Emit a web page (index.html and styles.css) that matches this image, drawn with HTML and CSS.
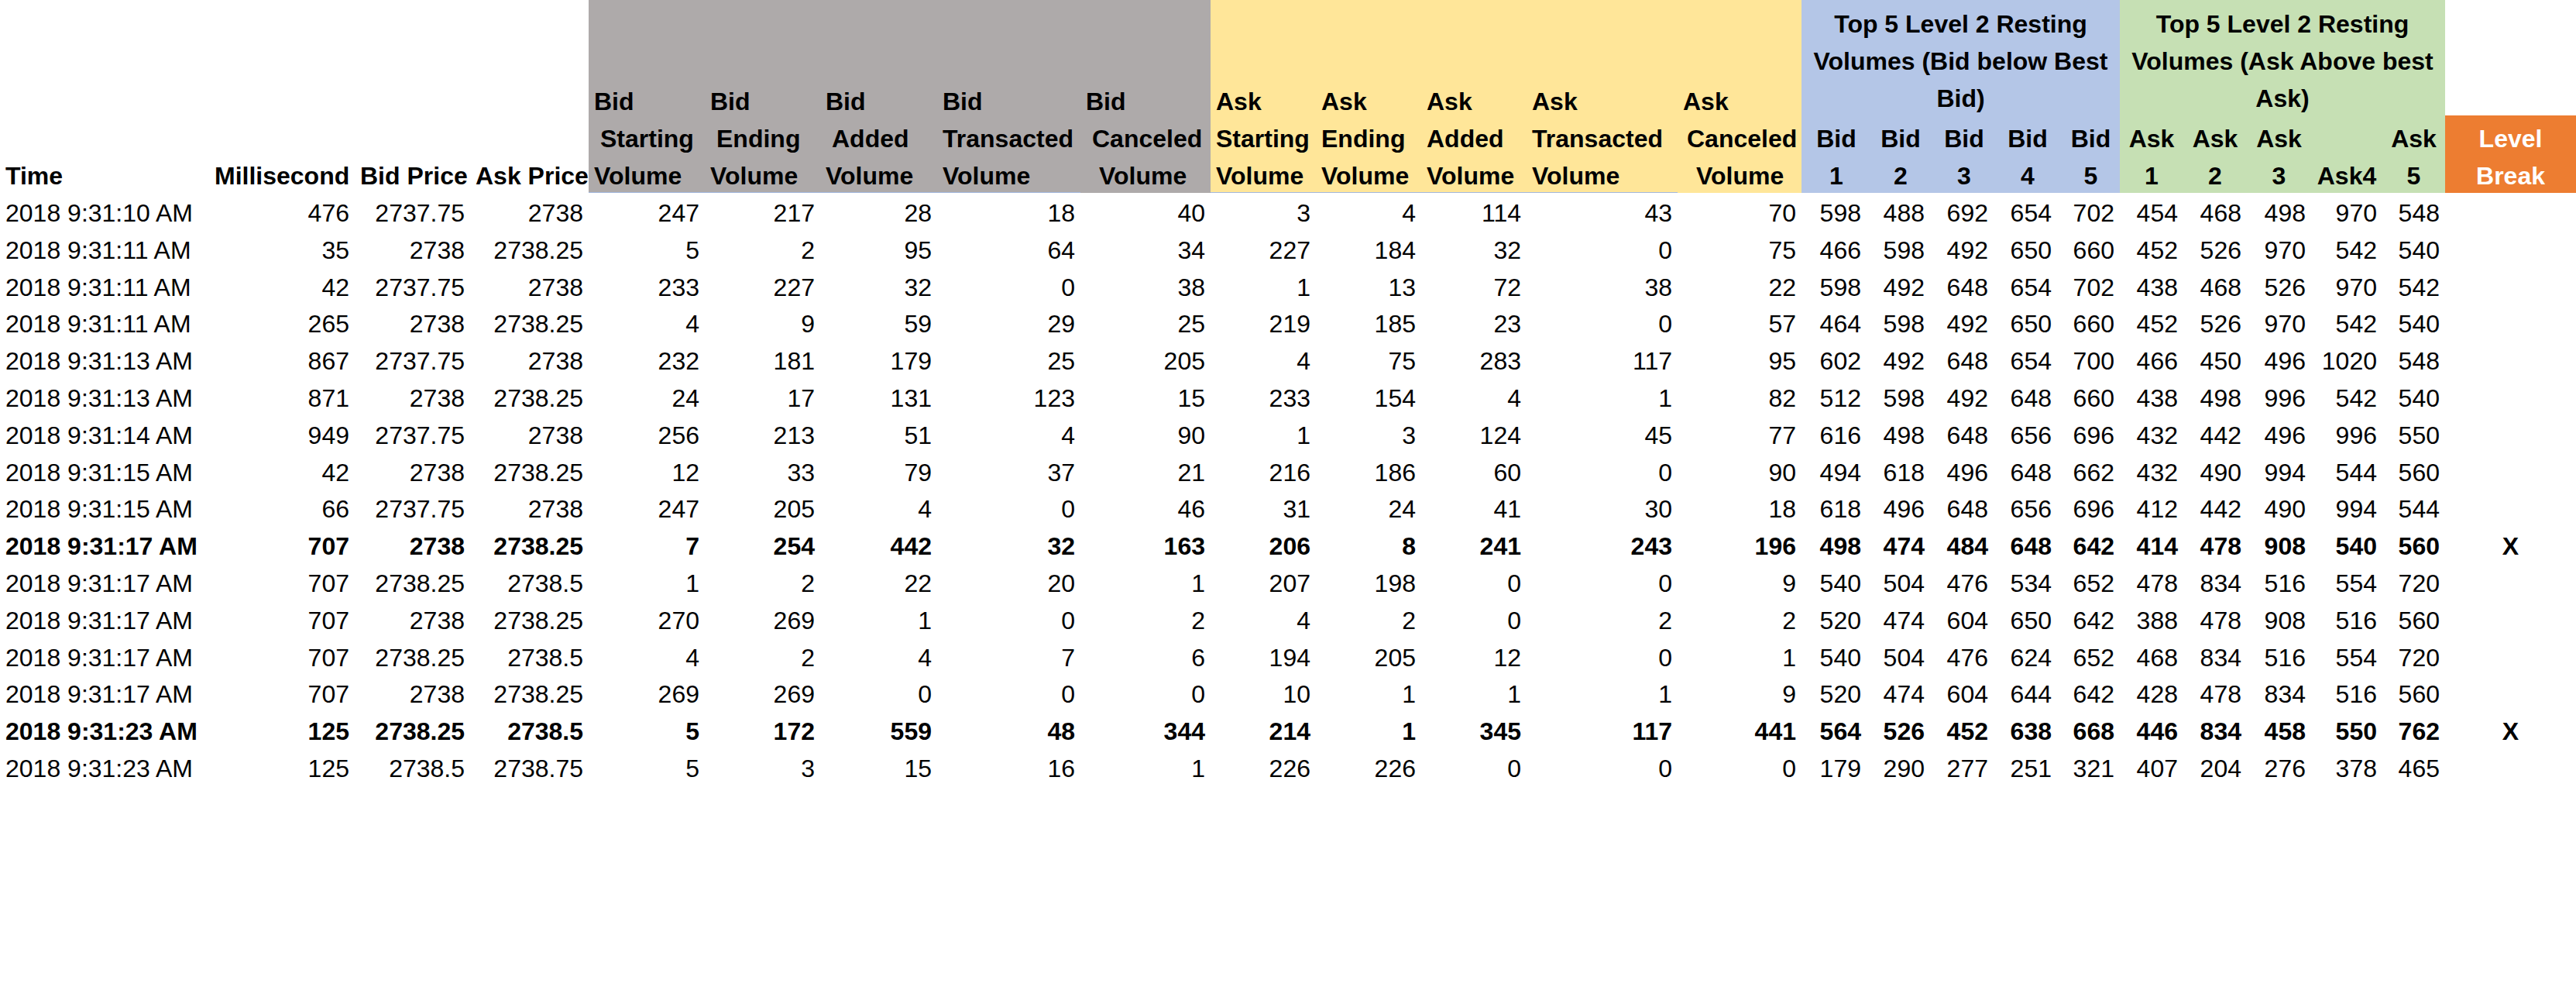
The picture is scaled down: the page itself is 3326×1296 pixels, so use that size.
FILE: index.html
```html
<!DOCTYPE html>
<html lang="en">
<head>
<meta charset="utf-8">
<title>Level 2 Order Book</title>
<link rel="stylesheet" href="styles.css">
</head>
<body>
<table class="sheet">
  <colgroup>
    <col style="width:270px"><col style="width:188px"><col style="width:149px"><col style="width:153px">
    <col style="width:150px"><col style="width:149px"><col style="width:151px"><col style="width:185px"><col style="width:168px">
    <col style="width:136px"><col style="width:136px"><col style="width:136px"><col style="width:195px"><col style="width:160px">
    <col style="width:84px"><col style="width:82px"><col style="width:82px"><col style="width:82px"><col style="width:81px">
    <col style="width:82px"><col style="width:82px"><col style="width:83px"><col style="width:92px"><col style="width:81px">
    <col style="width:169px">
  </colgroup>
  <thead>
    <tr class="h1">
      <th rowspan="2" class="left"><span class="ln">Time</span></th>
      <th rowspan="2" class="right"><span class="ln">Millisecond</span></th>
      <th rowspan="2" class="right"><span class="ln">Bid Price</span></th>
      <th rowspan="2" class="right"><span class="ln">Ask Price</span></th>
      <th rowspan="2" class="left gray line"><span class="ln top">Bid</span><span class="ln in1">Starting</span><span class="ln">Volume</span></th>
      <th rowspan="2" class="left gray line"><span class="ln top">Bid</span><span class="ln in1">Ending</span><span class="ln">Volume</span></th>
      <th rowspan="2" class="left gray line"><span class="ln top">Bid</span><span class="ln in1">Added</span><span class="ln">Volume</span></th>
      <th rowspan="2" class="left gray line"><span class="ln top">Bid</span><span class="ln">Transacted</span><span class="ln">Volume</span></th>
      <th rowspan="2" class="left gray"><span class="ln top">Bid</span><span class="ln in1">Canceled</span><span class="ln in2">Volume</span></th>
      <th rowspan="2" class="left yellow line"><span class="ln top">Ask</span><span class="ln">Starting</span><span class="ln">Volume</span></th>
      <th rowspan="2" class="left yellow line"><span class="ln top">Ask</span><span class="ln">Ending</span><span class="ln">Volume</span></th>
      <th rowspan="2" class="left yellow line"><span class="ln top">Ask</span><span class="ln">Added</span><span class="ln">Volume</span></th>
      <th rowspan="2" class="left yellow line"><span class="ln top">Ask</span><span class="ln">Transacted</span><span class="ln">Volume</span></th>
      <th rowspan="2" class="left yellow"><span class="ln top">Ask</span><span class="ln in3">Canceled</span><span class="ln in2">Volume</span></th>
      <th colspan="5" class="center blue"><span class="ln">Top 5 Level 2 Resting</span><span class="ln">Volumes (Bid below Best</span><span class="ln">Bid)</span></th>
      <th colspan="5" class="center green"><span class="ln">Top 5 Level 2 Resting</span><span class="ln">Volumes (Ask Above best</span><span class="ln">Ask)</span></th>
      <th></th>
    </tr>
    <tr class="h2">
      <th class="center blue shift"><span class="ln">Bid</span><span class="ln">1</span></th>
      <th class="center blue shift"><span class="ln">Bid</span><span class="ln">2</span></th>
      <th class="center blue shift"><span class="ln">Bid</span><span class="ln">3</span></th>
      <th class="center blue shift"><span class="ln">Bid</span><span class="ln">4</span></th>
      <th class="center blue shift"><span class="ln">Bid</span><span class="ln">5</span></th>
      <th class="center green"><span class="ln">Ask</span><span class="ln">1</span></th>
      <th class="center green"><span class="ln">Ask</span><span class="ln">2</span></th>
      <th class="center green"><span class="ln">Ask</span><span class="ln">3</span></th>
      <th class="center green"><span class="ln">Ask4</span></th>
      <th class="center green"><span class="ln">Ask</span><span class="ln">5</span></th>
      <th class="center orange"><span class="ln">Level</span><span class="ln">Break</span></th>
    </tr>
  </thead>
  <tbody>
    <tr><td>2018 9:31:10 AM</td><td>476</td><td>2737.75</td><td>2738</td><td>247</td><td>217</td><td>28</td><td>18</td><td>40</td><td>3</td><td>4</td><td>114</td><td>43</td><td>70</td><td>598</td><td>488</td><td>692</td><td>654</td><td>702</td><td>454</td><td>468</td><td>498</td><td>970</td><td>548</td><td></td></tr>
    <tr><td>2018 9:31:11 AM</td><td>35</td><td>2738</td><td>2738.25</td><td>5</td><td>2</td><td>95</td><td>64</td><td>34</td><td>227</td><td>184</td><td>32</td><td>0</td><td>75</td><td>466</td><td>598</td><td>492</td><td>650</td><td>660</td><td>452</td><td>526</td><td>970</td><td>542</td><td>540</td><td></td></tr>
    <tr><td>2018 9:31:11 AM</td><td>42</td><td>2737.75</td><td>2738</td><td>233</td><td>227</td><td>32</td><td>0</td><td>38</td><td>1</td><td>13</td><td>72</td><td>38</td><td>22</td><td>598</td><td>492</td><td>648</td><td>654</td><td>702</td><td>438</td><td>468</td><td>526</td><td>970</td><td>542</td><td></td></tr>
    <tr><td>2018 9:31:11 AM</td><td>265</td><td>2738</td><td>2738.25</td><td>4</td><td>9</td><td>59</td><td>29</td><td>25</td><td>219</td><td>185</td><td>23</td><td>0</td><td>57</td><td>464</td><td>598</td><td>492</td><td>650</td><td>660</td><td>452</td><td>526</td><td>970</td><td>542</td><td>540</td><td></td></tr>
    <tr><td>2018 9:31:13 AM</td><td>867</td><td>2737.75</td><td>2738</td><td>232</td><td>181</td><td>179</td><td>25</td><td>205</td><td>4</td><td>75</td><td>283</td><td>117</td><td>95</td><td>602</td><td>492</td><td>648</td><td>654</td><td>700</td><td>466</td><td>450</td><td>496</td><td>1020</td><td>548</td><td></td></tr>
    <tr><td>2018 9:31:13 AM</td><td>871</td><td>2738</td><td>2738.25</td><td>24</td><td>17</td><td>131</td><td>123</td><td>15</td><td>233</td><td>154</td><td>4</td><td>1</td><td>82</td><td>512</td><td>598</td><td>492</td><td>648</td><td>660</td><td>438</td><td>498</td><td>996</td><td>542</td><td>540</td><td></td></tr>
    <tr><td>2018 9:31:14 AM</td><td>949</td><td>2737.75</td><td>2738</td><td>256</td><td>213</td><td>51</td><td>4</td><td>90</td><td>1</td><td>3</td><td>124</td><td>45</td><td>77</td><td>616</td><td>498</td><td>648</td><td>656</td><td>696</td><td>432</td><td>442</td><td>496</td><td>996</td><td>550</td><td></td></tr>
    <tr><td>2018 9:31:15 AM</td><td>42</td><td>2738</td><td>2738.25</td><td>12</td><td>33</td><td>79</td><td>37</td><td>21</td><td>216</td><td>186</td><td>60</td><td>0</td><td>90</td><td>494</td><td>618</td><td>496</td><td>648</td><td>662</td><td>432</td><td>490</td><td>994</td><td>544</td><td>560</td><td></td></tr>
    <tr><td>2018 9:31:15 AM</td><td>66</td><td>2737.75</td><td>2738</td><td>247</td><td>205</td><td>4</td><td>0</td><td>46</td><td>31</td><td>24</td><td>41</td><td>30</td><td>18</td><td>618</td><td>496</td><td>648</td><td>656</td><td>696</td><td>412</td><td>442</td><td>490</td><td>994</td><td>544</td><td></td></tr>
    <tr class="bold"><td>2018 9:31:17 AM</td><td>707</td><td>2738</td><td>2738.25</td><td>7</td><td>254</td><td>442</td><td>32</td><td>163</td><td>206</td><td>8</td><td>241</td><td>243</td><td>196</td><td>498</td><td>474</td><td>484</td><td>648</td><td>642</td><td>414</td><td>478</td><td>908</td><td>540</td><td>560</td><td>X</td></tr>
    <tr><td>2018 9:31:17 AM</td><td>707</td><td>2738.25</td><td>2738.5</td><td>1</td><td>2</td><td>22</td><td>20</td><td>1</td><td>207</td><td>198</td><td>0</td><td>0</td><td>9</td><td>540</td><td>504</td><td>476</td><td>534</td><td>652</td><td>478</td><td>834</td><td>516</td><td>554</td><td>720</td><td></td></tr>
    <tr><td>2018 9:31:17 AM</td><td>707</td><td>2738</td><td>2738.25</td><td>270</td><td>269</td><td>1</td><td>0</td><td>2</td><td>4</td><td>2</td><td>0</td><td>2</td><td>2</td><td>520</td><td>474</td><td>604</td><td>650</td><td>642</td><td>388</td><td>478</td><td>908</td><td>516</td><td>560</td><td></td></tr>
    <tr><td>2018 9:31:17 AM</td><td>707</td><td>2738.25</td><td>2738.5</td><td>4</td><td>2</td><td>4</td><td>7</td><td>6</td><td>194</td><td>205</td><td>12</td><td>0</td><td>1</td><td>540</td><td>504</td><td>476</td><td>624</td><td>652</td><td>468</td><td>834</td><td>516</td><td>554</td><td>720</td><td></td></tr>
    <tr><td>2018 9:31:17 AM</td><td>707</td><td>2738</td><td>2738.25</td><td>269</td><td>269</td><td>0</td><td>0</td><td>0</td><td>10</td><td>1</td><td>1</td><td>1</td><td>9</td><td>520</td><td>474</td><td>604</td><td>644</td><td>642</td><td>428</td><td>478</td><td>834</td><td>516</td><td>560</td><td></td></tr>
    <tr class="bold"><td>2018 9:31:23 AM</td><td>125</td><td>2738.25</td><td>2738.5</td><td>5</td><td>172</td><td>559</td><td>48</td><td>344</td><td>214</td><td>1</td><td>345</td><td>117</td><td>441</td><td>564</td><td>526</td><td>452</td><td>638</td><td>668</td><td>446</td><td>834</td><td>458</td><td>550</td><td>762</td><td>X</td></tr>
    <tr><td>2018 9:31:23 AM</td><td>125</td><td>2738.5</td><td>2738.75</td><td>5</td><td>3</td><td>15</td><td>16</td><td>1</td><td>226</td><td>226</td><td>0</td><td>0</td><td>0</td><td>179</td><td>290</td><td>277</td><td>251</td><td>321</td><td>407</td><td>204</td><td>276</td><td>378</td><td>465</td><td></td></tr>
  </tbody>
</table>
</body>
</html>
```

FILE: styles.css
```css
html, body {
  margin: 0;
  padding: 0;
  background: #ffffff;
  overflow: hidden;
}

.sheet {
  table-layout: fixed;
  width: 3326px;
  border-collapse: separate;
  border-spacing: 0;
  font-family: "Liberation Sans", Arial, sans-serif;
  font-size: 32px;
  color: #000000;
}

.sheet th {
  padding: 0 7px;
  vertical-align: bottom;
  font-weight: bold;
  white-space: nowrap;
  overflow: hidden;
}

.sheet .h1 th {
  height: 149px;
}

.sheet .h2 th {
  height: 100px;
}

.ln {
  display: block;
  line-height: 44px;
  margin-top: 4px;
}

.ln.top {
  margin-bottom: 4px;
}

.in1 { padding-left: 8px; }
.in2 { padding-left: 17px; }
.in3 { padding-left: 5px; }

.left { text-align: left; }
.right { text-align: right; }
.center { text-align: center; }

.gray { background: #aeaaaa; }
.yellow { background: #ffe699; }
.blue { background: #b4c6e7; }
.green { background: #c6e0b4; }
.orange { background: #ed7d31; color: #ffffff; }

.line {
  box-shadow: inset 0 -1px 0 #a3b9df;
}

.sheet .shift {
  padding: 0 4px 0 10px;
}

.sheet td {
  padding: 5px 7px 0;
  line-height: 42.8px;
  text-align: right;
  white-space: nowrap;
  overflow: hidden;
}

.sheet td:first-child {
  text-align: left;
}

.sheet td:last-child {
  text-align: center;
}

.sheet tr.bold td {
  font-weight: bold;
}
```
